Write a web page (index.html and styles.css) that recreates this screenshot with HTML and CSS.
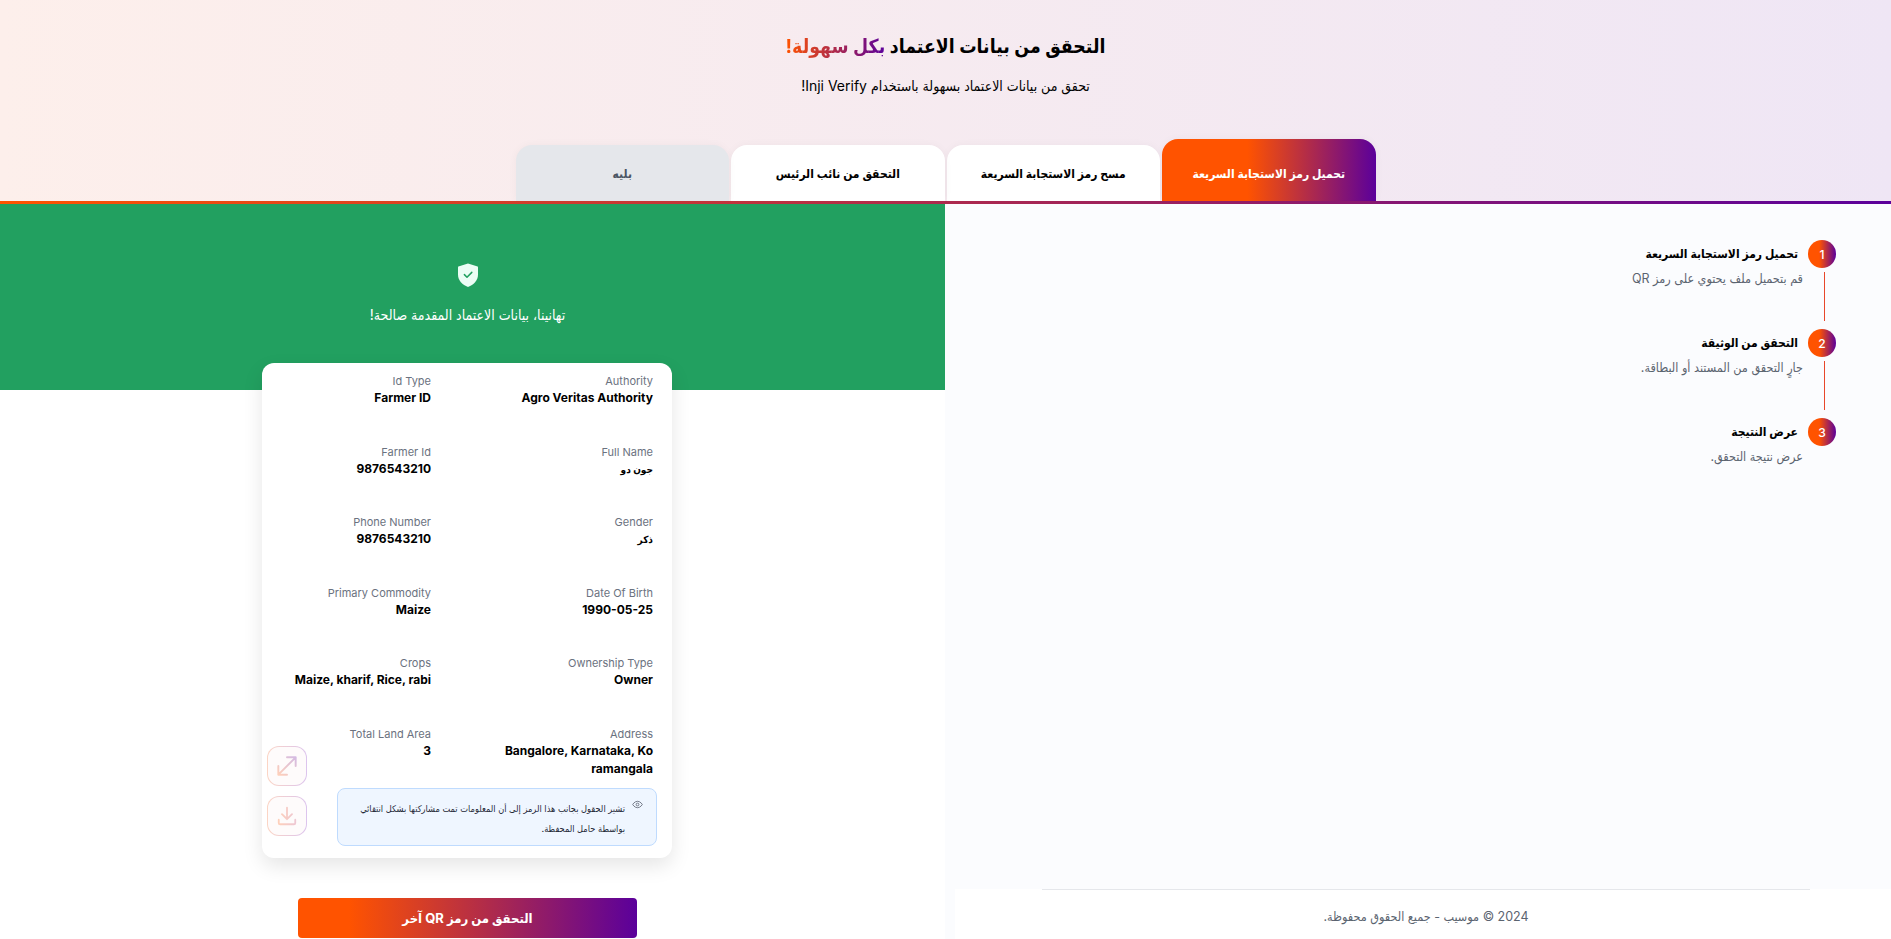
FILE: index.html
```html
<!DOCTYPE html>
<html lang="ar" dir="rtl">
<head>
<meta charset="utf-8">
<title>Inji Verify</title>
<link rel="stylesheet" href="styles.css">
</head>
<body>
<div class="page">
  <header class="hero">
    <div class="hero-copy">
      <h1 class="hero-title">التحقق من بيانات الاعتماد <span class="grad-text">بكل سهولة!</span></h1>
      <p class="hero-sub">تحقق من بيانات الاعتماد بسهولة باستخدام Inji Verify!</p>
    </div>
    <nav class="tabs">
      <div class="tab tab-active">تحميل رمز الاستجابة السريعة</div>
      <div class="tab">مسح رمز الاستجابة السريعة</div>
      <div class="tab">التحقق من نائب الرئيس</div>
      <div class="tab tab-off">بليه</div>
    </nav>
  </header>
  <div class="rule"></div>
  <main class="main">
    <section class="steps-pane">
      <ol class="steps">
        <li class="step">
          <div class="step-mark"><span class="step-num">1</span><span class="step-line"></span></div>
          <div class="step-text"><div class="step-title">تحميل رمز الاستجابة السريعة</div><div class="step-desc">قم بتحميل ملف يحتوي على رمز QR</div></div>
        </li>
        <li class="step">
          <div class="step-mark"><span class="step-num">2</span><span class="step-line"></span></div>
          <div class="step-text"><div class="step-title">التحقق من الوثيقة</div><div class="step-desc">جارٍ التحقق من المستند أو البطاقة.</div></div>
        </li>
        <li class="step">
          <div class="step-mark"><span class="step-num">3</span></div>
          <div class="step-text"><div class="step-title">عرض النتيجة</div><div class="step-desc">عرض نتيجة التحقق.</div></div>
        </li>
      </ol>
      <footer class="footer"><div class="footer-text">2024 © موسيب - جميع الحقوق محفوظة.</div></footer>
    </section>
    <section class="result-pane">
      <div class="banner">
        <svg class="shield" viewBox="0 0 20 24" width="20" height="24" aria-hidden="true">
          <path d="M10 0.4 L19.6 3.6 Q20 3.8 20 4.4 V11.5 C20 17.6 15.6 21.8 10 24 C4.4 21.8 0 17.6 0 11.5 V4.4 Q0 3.8 .4 3.6 Z" fill="#ecfdf5"/>
          <path d="M6.4 11.6 L9 14.2 L13.8 9.4" fill="none" stroke="#22a060" stroke-width="1.5" stroke-linecap="round" stroke-linejoin="round"/>
        </svg>
        <p class="banner-text">تهانينا، بيانات الاعتماد المقدمة صالحة!</p>
      </div>
      <div class="result-body">
        <div class="card">
          <div class="fields">
            <div class="field"><div class="f-label">Authority</div><div class="f-value">Agro Veritas Authority</div></div>
            <div class="field"><div class="f-label">Id Type</div><div class="f-value">Farmer ID</div></div>
            <div class="field"><div class="f-label">Full Name</div><div class="f-value f-ar">جون دو</div></div>
            <div class="field"><div class="f-label">Farmer Id</div><div class="f-value">9876543210</div></div>
            <div class="field"><div class="f-label">Gender</div><div class="f-value f-ar">ذكر</div></div>
            <div class="field"><div class="f-label">Phone Number</div><div class="f-value">9876543210</div></div>
            <div class="field"><div class="f-label">Date Of Birth</div><div class="f-value">1990-05-25</div></div>
            <div class="field"><div class="f-label">Primary Commodity</div><div class="f-value">Maize</div></div>
            <div class="field"><div class="f-label">Ownership Type</div><div class="f-value">Owner</div></div>
            <div class="field"><div class="f-label">Crops</div><div class="f-value">Maize, kharif, Rice, rabi</div></div>
            <div class="field"><div class="f-label">Address</div><div class="f-value">Bangalore, Karnataka, Koramangala</div></div>
            <div class="field"><div class="f-label">Total Land Area</div><div class="f-value">3</div></div>
          </div>
          <div class="notice">
            <svg class="eye" viewBox="0 0 24 24" width="11" height="11" aria-hidden="true"><path d="M1.5 12S5.5 5 12 5s10.500 7 10.500 7-4 7-10.500 7S1.500 12 1.500 12Z" fill="none" stroke="#6b7280" stroke-width="2"/><circle cx="12" cy="12" r="3" fill="none" stroke="#6b7280" stroke-width="2"/></svg>
            <p class="notice-text">تشير الحقول بجانب هذا الرمز إلى أن المعلومات تمت مشاركتها بشكل انتقائي بواسطة حامل المحفظة.</p>
          </div>
          <div class="actions">
            <div class="act">
              <svg viewBox="0 0 24 24" width="26" height="26" aria-hidden="true"><defs><linearGradient id="g1" x1="0" x2="1" y1="1" y2="0"><stop offset="0" stop-color="#ff5300"/><stop offset="1" stop-color="#5b009b"/></linearGradient></defs><path d="M4 20 L20 4 M12 4 H20 V12 M4 12 V20 H12" fill="none" stroke="url(#g1)" stroke-width="1.800" stroke-linecap="round" stroke-linejoin="round"/></svg>
            </div>
            <div class="act">
              <svg viewBox="0 0 24 24" width="22" height="22" aria-hidden="true"><defs><linearGradient id="g2" x1="0" x2="1" y1="0" y2="0"><stop offset="0" stop-color="#ff5300"/><stop offset="1" stop-color="#c0305a"/></linearGradient></defs><path d="M12 3 V15 M6.500 10 L12 15.500 L17.500 10 M3 16 V19.500 Q3 21 4.500 21 H19.500 Q21 21 21 19.500 V16" fill="none" stroke="url(#g2)" stroke-width="2" stroke-linecap="round" stroke-linejoin="round"/></svg>
            </div>
          </div>
        </div>
        <button class="again" type="button">التحقق من رمز QR آخر</button>
      </div>
    </section>
  </main>
</div>
</body>
</html>
```
FILE: styles.css
```css
* { box-sizing: border-box; }
html, body { margin: 0; height: 100%; overflow: hidden; }
body { font-family: Inter, "DejaVu Sans Condensed", "DejaVu Sans", sans-serif; color: #000; background: #fff; }
.page { height: 939px; display: flex; flex-direction: column; }

.hero {
  height: 201px;
  display: flex;
  flex-direction: column;
  justify-content: space-between;
  align-items: center;
  background: linear-gradient(to left, #efe6f5, #fdefeb);
}
.hero-copy { padding-top: 30px; text-align: center; }
.hero-title { margin: 0; font-size: 19.300px; line-height: 32px; font-weight: 700; }
.grad-text {
  background: linear-gradient(to right, #ff5300, #5b009b);
  -webkit-background-clip: text;
  background-clip: text;
  color: transparent;
}
.hero-sub { margin: 14px 0 0; font-size: 14px; line-height: 20px; }

.tabs { display: flex; align-items: flex-end; gap: 2px; }
.tab {
  width: 213.5px;
  height: 56px;
  display: flex;
  align-items: center;
  justify-content: center;
  background: #fff;
  border-radius: 16px 16px 0 0;
  font-size: 12px;
  font-weight: 700;
  box-shadow: 0 0 8px rgba(0, 0, 0, .04);
}
.tab-active {
  height: 62px;
  padding-top: 6px;
  color: #fff;
  background: linear-gradient(to right, #ff5300 40%, #5b009b);
}
.tab-off { background: #e5e7eb; color: #4b5563; }

.rule { height: 3px; flex: none; background: linear-gradient(to right, #ff5300, #5b009b); }

.main { flex: 1; min-height: 0; display: flex; }
.steps-pane {
  flex: 1;
  display: flex;
  flex-direction: column;
  background: #fbfcfe;
}
.steps { flex: 1; margin: 0; padding: 36px 55px 0 0; list-style: none; }
.step { display: flex; height: 89px; gap: 5px; }
.step-mark { width: 28px; flex: none; display: flex; flex-direction: column; align-items: center; }
.step-num {
  width: 28px;
  height: 28px;
  flex: none;
  display: flex;
  align-items: center;
  justify-content: center;
  border-radius: 50%;
  color: #fff;
  font-size: 12px;
  font-weight: 500;
  background: linear-gradient(to right, #ff5300 40%, #5b009b);
}
.step-line { width: 1px; height: 49px; margin: 4px -4px 0 0; background: #e8472a; }
.step-text { padding-top: 4px; }
.step-title { padding-right: 5px; font-size: 12px; line-height: 20px; font-weight: 700; }
.step-desc { margin-top: 6px; font-size: 12.500px; line-height: 18px; color: #5b6470; }

.footer { height: 50px; flex: none; margin-left: 10px; background: #fff; padding: 0 81px 0 87px; }
.footer-text {
  height: 100%;
  padding-top: 17px;
  border-top: 1px solid #e5e7eb;
  text-align: center;
  font-size: 12.500px;
  line-height: 20px;
  color: #5b6470;
}

.result-pane { width: 945px; flex: none; display: flex; flex-direction: column; background: #fff; }
.banner {
  height: 186px;
  flex: none;
  padding: 59px 10px 0 0;
  display: flex;
  flex-direction: column;
  align-items: center;
  color: #fff;
  background: #22a060;
}
.shield { flex: none; }
.banner-text { margin: 18px 0 0; font-size: 14px; line-height: 20px; }

.result-body { padding-right: 10px; display: flex; flex-direction: column; align-items: center; }
.card {
  position: relative;
  width: 410px;
  margin: -27px 1px 0 0;
  padding: 10px 19px 12px 0;
  background: #fff;
  border-radius: 12px;
  box-shadow: 0 8px 20px rgba(0, 0, 0, .1);
}
.fields {
  display: grid;
  grid-template-columns: 222px 222px;
  grid-auto-rows: 52.6px;
  row-gap: 18px;
}
.field { min-width: 0; }
.f-label { font-size: 11px; line-height: 16px; color: #6b7280; }
.f-value { max-width: 150px; font-size: 12px; line-height: 18.300px; font-weight: 700; word-break: break-all; }
.f-ar { font-size: 10px; }

.notice {
  display: flex;
  gap: 7px;
  width: 320px;
  height: 58px;
  margin: 9px -4px 0 0;
  padding: 10px 13px 0 12px;
  background: #eff6ff;
  border: 1px solid #bfdbfe;
  border-radius: 8px;
}
.eye { flex: none; }
.notice-text { margin: 0; font-size: 9.200px; line-height: 20px; color: #1f2937; }

.actions {
  position: absolute;
  left: 5px;
  top: 383px;
  display: flex;
  flex-direction: column;
  gap: 10px;
}
.act {
  width: 40px;
  height: 40px;
  display: flex;
  align-items: center;
  justify-content: center;
  border-radius: 12px;
  border: 1px solid transparent;
  background:
    linear-gradient(#fefbfb, #fefbfb) padding-box,
    linear-gradient(to right, #fcd5c4, #dcc4ee) border-box;
}
.act svg { opacity: .25; }

.again {
  width: 339px;
  height: 40px;
  margin-top: 40px;
  flex: none;
  border: 0;
  border-radius: 4px;
  color: #fff;
  font: 700 13px Inter, "DejaVu Sans Condensed", "DejaVu Sans", sans-serif;
  background: linear-gradient(to right, #ff5300 15%, #5b009b);
}
```
